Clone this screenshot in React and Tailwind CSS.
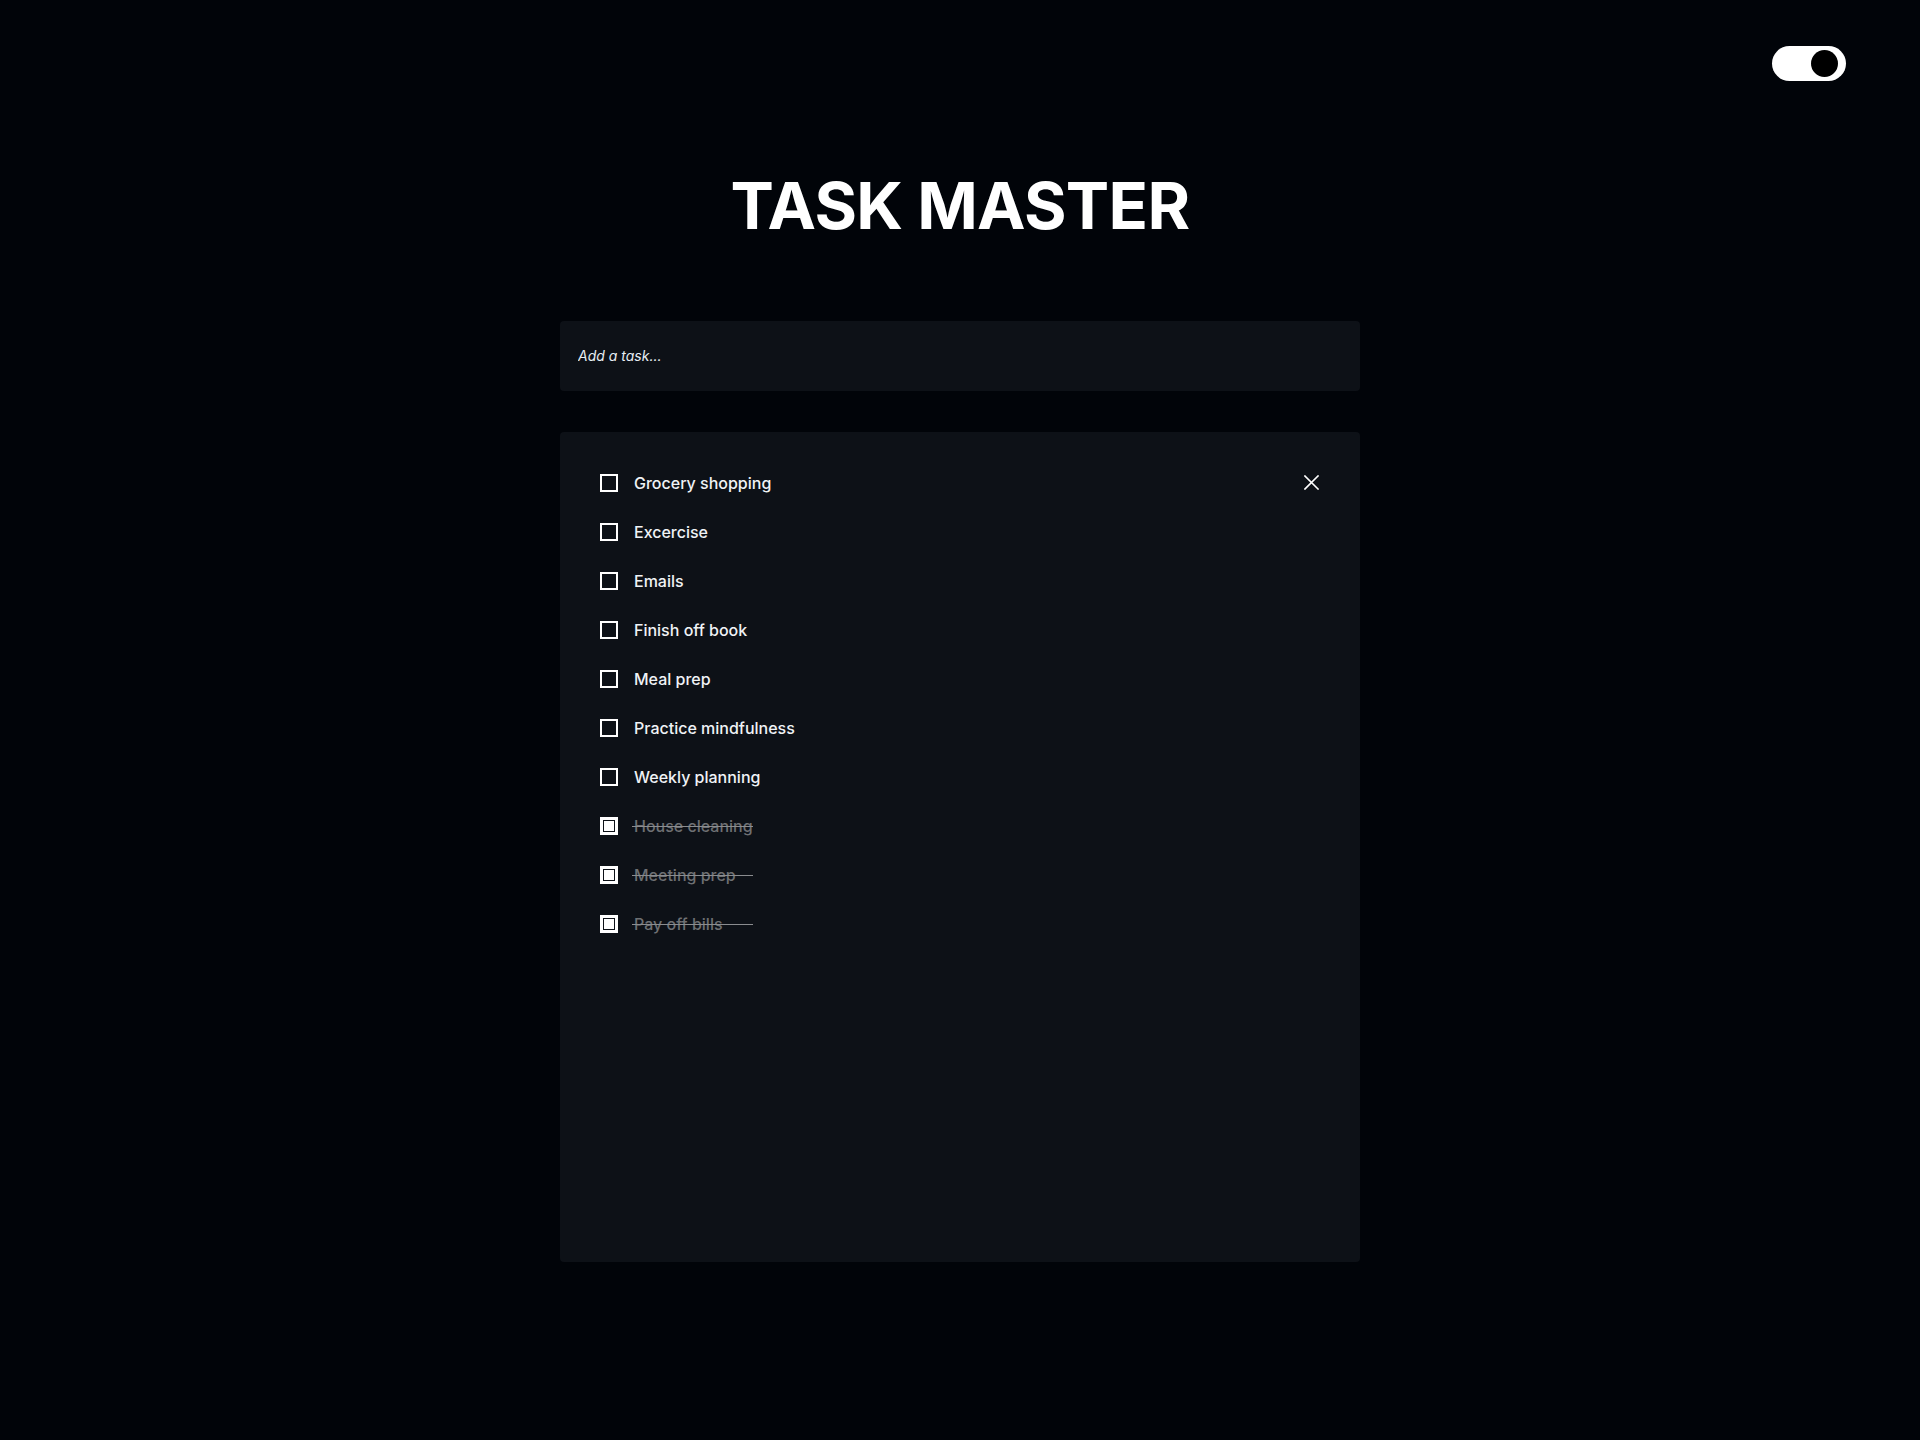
import { useState } from 'react'

const initialTasks = [
  { id: 1, title: 'Grocery shopping', done: false },
  { id: 2, title: 'Excercise', done: false },
  { id: 3, title: 'Emails', done: false },
  { id: 4, title: 'Finish off book', done: false },
  { id: 5, title: 'Meal prep', done: false },
  { id: 6, title: 'Practice mindfulness', done: false },
  { id: 7, title: 'Weekly planning', done: false },
  { id: 8, title: 'House cleaning', done: true },
  { id: 9, title: 'Meeting prep', done: true },
  { id: 10, title: 'Pay off bills', done: true }
]

const Checkbox = ({ checked, onClick }) => (
  <button
    onClick={onClick}
    className={`flex h-[18px] w-[18px] shrink-0 items-center justify-center border-2 border-white ${checked ? 'bg-white' : 'bg-transparent'}`}
  >
    {checked && <span className="h-[12px] w-[12px] border border-[#0d1117] bg-white" />}
  </button>
)

const App = () => {
  const [tasks, setTasks] = useState(initialTasks)
  const [text, setText] = useState('')
  const [dark, setDark] = useState(true)

  const toggleTask = id => {
    setTasks(tasks.map(task => (task.id === id ? { ...task, done: !task.done } : task)))
  }

  const handleKeyDown = e => {
    if (e.key === 'Enter' && text.trim()) {
      setTasks([{ id: Date.now(), title: text.trim(), done: false }, ...tasks])
      setText('')
    }
  }

  return (
    <div className="min-h-screen bg-[#010409] font-['Inter','Noto_Sans',sans-serif] text-white">
      <header className="flex justify-end px-[74px] pt-[46px]">
        <button
          onClick={() => setDark(!dark)}
          className="flex h-[35px] w-[74px] items-center justify-end rounded-full bg-white pr-[8px]"
        >
          <span className="h-[27px] w-[27px] rounded-full bg-black" />
        </button>
      </header>

      <main className="mx-auto w-[800px] pb-20">
        <h1 className="mt-[92px] text-center text-[65px] font-bold leading-none tracking-[-0.01em]">TASK MASTER</h1>

        <input
          value={text}
          onChange={e => setText(e.target.value)}
          onKeyDown={handleKeyDown}
          placeholder="Add a task..."
          className="mt-[83px] block h-[70px] w-full rounded bg-[#0d1117] px-[18px] pb-[2px] text-[14px] italic text-[#e6edf3] outline-none placeholder:text-[#e6edf3]"
        />

        <section className="relative mt-[41px] h-[830px] rounded bg-[#0d1117] px-10 pt-[39px]">
          <button className="absolute right-[41px] top-[43px] text-white">
            <svg width="15" height="15" viewBox="0 0 15 15" fill="none" stroke="currentColor" strokeWidth="1.6" strokeLinecap="square">
              <path d="M1 1 14 14M14 1 1 14" />
            </svg>
          </button>

          <ul className="flex flex-col gap-[25px]">
            {tasks.map(task => (
              <li key={task.id} className="flex h-6 items-center gap-4">
                <Checkbox checked={task.done} onClick={() => toggleTask(task.id)} />
                {task.done ? (
                  <span className="relative w-[119px] text-[16px] font-medium text-[#6e7073]">
                    {task.title}
                    <span className="absolute left-[-2px] right-0 top-1/2 h-px bg-[#8a8c8f]" />
                  </span>
                ) : (
                  <span className="text-[16px] font-medium text-[#f0f3f6]">{task.title}</span>
                )}
              </li>
            ))}
          </ul>
        </section>
      </main>
    </div>
  )
}

export default App
